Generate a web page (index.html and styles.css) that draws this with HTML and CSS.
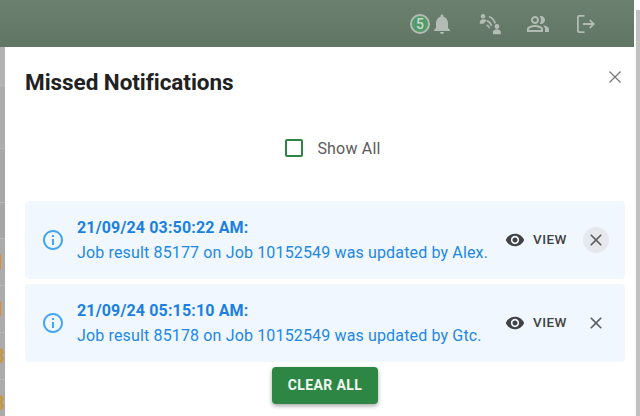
FILE: index.html
```html
<!DOCTYPE html>
<html lang="en">
<head>
<meta charset="utf-8">
<title>Missed Notifications</title>
<link rel="stylesheet" href="styles.css">
</head>
<body>
<div class="window">
<header class="topbar">
  <span class="badge">5</span>
  <svg class="icon bell" viewBox="0 0 24 24"><path d="M12 22c1.100 0 2-.9 2-2h-4c0 1.100.9 2 2 2m6-6v-5c0-3.070-1.630-5.640-4.500-6.320V4c0-.83-.67-1.500-1.500-1.500s-1.500.67-1.500 1.500v.68C7.640 5.360 6 7.920 6 11v5l-2 2v1h16v-1z"/></svg>
  <svg class="icon wave" viewBox="0 0 24 24"><circle cx="5" cy="4.200" r="2.200"/><path d="M1.800 11.800V9.800c0-1.500 2-2.500 3.400-2.500 1.400 0 2.600.5 3.500 1.200l-3.200 3.300zM21.300 14.500a2.400 2.400 0 1 1-4.800 0 2.400 2.400 0 0 1 4.800 0M15 22.200v-2.400c0-1.400 2.400-2.500 3.900-2.500s3.900 1.100 3.900 2.500v2.400z"/><path class="line" d="M11 4.500c3.200 1.200 5.200 3.400 6.200 7M9 8.800c2.300.8 3.800 2.500 4.500 5M8.500 13c1.300.5 2.300 1.500 3 3"/></svg>
  <svg class="icon people" viewBox="0 0 24 24"><path d="M16.670 13.130C18.040 14.060 19 15.320 19 17v3h4v-3c0-2.180-3.570-3.470-6.330-3.870M15 12c2.210 0 4-1.790 4-4s-1.790-4-4-4c-.47 0-.91.100-1.330.24C14.500 5.270 15 6.580 15 8s-.5 2.730-1.330 3.760c.42.140.86.240 1.330.24M9 12c2.210 0 4-1.790 4-4s-1.790-4-4-4-4 1.790-4 4 1.790 4 4 4m0-6c1.100 0 2 .9 2 2s-.9 2-2 2-2-.9-2-2 .9-2 2-2m0 7c-2.670 0-8 1.340-8 4v3h16v-3c0-2.660-5.330-4-8-4m6 5H3v-.99C3.200 16.290 6.300 15 9 15s5.800 1.290 6 2z"/></svg>
  <svg class="icon logout" viewBox="0 0 24 24"><path d="M10.500 3H5a2 2 0 0 0-2 2v14a2 2 0 0 0 2 2h5.500v-1.800H4.800V4.800h5.700zM16.500 7.500l-1.300 1.300 2.300 2.300H9v1.800h8.500l-2.300 2.300 1.300 1.300 4.500-4.500z"/></svg>
</header>

<div class="page">
  <div class="backdrop-rows">
    <div class="row row-a"></div>
    <div class="row row-b"></div>
    <div class="row row-c"></div>
    <div class="row row-d"></div>
    <div class="row"><span class="digit">1</span></div>
    <div class="row"><span class="digit">1</span></div>
    <div class="row"><span class="digit">3</span></div>
    <div class="row"><span class="digit">3</span></div>
  </div>

  <main class="dialog">
    <div class="dialog-head">
      <h1 class="dialog-title">Missed Notifications</h1>
      <button class="close-dialog" aria-label="Close">
        <svg class="thin-x" viewBox="0 0 12 12"><path d="M.5.500l11 11M11.500.500l-11 11"/></svg>
      </button>
    </div>

    <label class="show-all">
      <span class="check"></span>
      <span class="show-label">Show All</span>
    </label>

    <section class="alerts">
      <article class="alert">
        <svg class="info" viewBox="0 0 24 24"><path d="M11 7h2v2h-2zm0 4h2v6h-2zm1-9C6.480 2 2 6.480 2 12s4.480 10 10 10 10-4.480 10-10S17.520 2 12 2m0 18c-4.410 0-8-3.590-8-8s3.590-8 8-8 8 3.590 8 8-3.590 8-8 8"/></svg>
        <div class="message">
          <div class="stamp">21/09/24 03:50:22 AM:</div>
          <div class="text">Job result 85177 on Job 10152549 was updated by Alex.</div>
        </div>
        <button class="view">
          <svg class="eye" viewBox="0 0 24 24"><path d="M12 4.500C7 4.500 2.730 7.610 1 12c1.730 4.390 6 7.500 11 7.500s9.270-3.110 11-7.500c-1.730-4.390-6-7.500-11-7.500M12 17c-2.760 0-5-2.240-5-5s2.240-5 5-5 5 2.240 5 5-2.240 5-5 5m0-8c-1.660 0-3 1.340-3 3s1.340 3 3 3 3-1.340 3-3-1.340-3-3-3"/></svg>
          <span class="view-label">VIEW</span>
        </button>
        <button class="dismiss hovered" aria-label="Dismiss">
          <svg class="x" viewBox="0 0 24 24"><path d="M19 6.410 17.590 5 12 10.590 6.410 5 5 6.410 10.590 12 5 17.590 6.410 19 12 13.410 17.590 19 19 17.590 13.410 12z"/></svg>
        </button>
      </article>
      <article class="alert">
        <svg class="info" viewBox="0 0 24 24"><path d="M11 7h2v2h-2zm0 4h2v6h-2zm1-9C6.480 2 2 6.480 2 12s4.480 10 10 10 10-4.480 10-10S17.520 2 12 2m0 18c-4.410 0-8-3.590-8-8s3.590-8 8-8 8 3.590 8 8-3.590 8-8 8"/></svg>
        <div class="message">
          <div class="stamp">21/09/24 05:15:10 AM:</div>
          <div class="text">Job result 85178 on Job 10152549 was updated by Gtc.</div>
        </div>
        <button class="view">
          <svg class="eye" viewBox="0 0 24 24"><path d="M12 4.500C7 4.500 2.730 7.610 1 12c1.730 4.390 6 7.500 11 7.500s9.270-3.110 11-7.500c-1.730-4.390-6-7.500-11-7.500M12 17c-2.760 0-5-2.240-5-5s2.240-5 5-5 5 2.240 5 5-2.240 5-5 5m0-8c-1.660 0-3 1.340-3 3s1.340 3 3 3 3-1.340 3-3-1.340-3-3-3"/></svg>
          <span class="view-label">VIEW</span>
        </button>
        <button class="dismiss" aria-label="Dismiss">
          <svg class="x" viewBox="0 0 24 24"><path d="M19 6.410 17.590 5 12 10.590 6.410 5 5 6.410 10.590 12 5 17.590 6.410 19 12 13.410 17.590 19 19 17.590 13.410 12z"/></svg>
        </button>
      </article>
    </section>

    <div class="actions">
      <button class="clear">CLEAR ALL</button>
    </div>
  </main>
</div>
</div>
<aside class="scrollbar">
  <div class="arrow"></div>
  <div class="thumb"></div>
</aside>
</body>
</html>
```

FILE: styles.css
```css
* { box-sizing: border-box; }
html, body { margin: 0; height: 416px; overflow: hidden; }
body { font-family: Roboto, "Liberation Sans", sans-serif; background: #fff; display: flex; }
button { font-family: inherit; border: 0; background: none; padding: 0; }

.window { width: 634px; flex: none; display: flex; flex-direction: column; height: 416px; }

.scrollbar { flex: 1; background: #fbfbfb; padding-left: 2px; display: flex; flex-direction: column; }
.arrow { height: 10px; flex: none; }
.thumb { flex: 1; background: #c1c1c1; }

.topbar { height: 47px; flex: none; background: linear-gradient(#6b806f, #617565); display: flex; align-items: center; padding-left: 410px; fill: #b3bcb4; }
.badge { width: 20px; height: 20px; border-radius: 50%; background: #559a6a; border: 2px solid #b3bcb4; color: #c6d6ca; font-size: 14px; font-weight: 500; display: flex; align-items: center; justify-content: center; }
.icon { width: 24px; height: 24px; flex: none; }
.wave { margin-left: 24px; }
.people { margin-left: 24px; }
.logout { margin-left: 24px; }
.line { fill: none; stroke: #b3bcb4; stroke-width: 1.600; }

.page { flex: 1; display: flex; min-height: 0; }
.backdrop-rows { width: 5px; flex: none; background: #ababab; overflow: hidden; }
.row { height: 47px; border-top: 1px solid #b8b8b8; overflow: hidden; display: flex; justify-content: flex-end; align-items: center; }
.row-a { height: 38px; border-top: 0; background: #b3b3b3; }
.row-b { height: 63px; background: #adadad; }
.row-c { height: 54px; background: #a8a8a8; }
.row-d { height: 36px; background: #a6a6a6; }
.digit { font-size: 20px; font-weight: 700; line-height: 20px; color: #c6983f; flex: none; }

.dialog { flex: 1; background: #fff; border-radius: 8px 8px 0 0; padding: 0 9px 0 20px; display: flex; flex-direction: column; }

.dialog-head { height: 70px; display: flex; align-items: center; justify-content: space-between; flex: none; padding-bottom: 1px; }
.dialog-title { margin: 0; font-size: 22.500px; font-weight: 700; letter-spacing: -.05px; color: #212121; }
.close-dialog { width: 12px; height: 12px; margin: 0 4px 9px 0; }
.thin-x { width: 12px; height: 12px; display: block; fill: none; stroke: #757575; stroke-width: 1.200; }

.show-all { display: flex; align-items: center; justify-content: center; gap: 14px; height: 22px; margin-top: 20px; padding-left: 16px; flex: none; }
.check { width: 18px; height: 18px; border: 2px solid #2e8644; border-radius: 2px; }
.show-label { font-size: 16px; color: #5b5b5b; letter-spacing: .2px; }

.alerts { margin-top: 42px; display: flex; flex-direction: column; gap: 5px; flex: none; }
.alert { height: 78px; background: #f0f7fe; border-radius: 4px; display: flex; align-items: center; padding: 0 16px; color: #1e88e5; }
.info { width: 24px; height: 24px; flex: none; fill: #42a5f5; }
.message { flex: 1; margin-left: 12px; font-size: 16px; line-height: 25px; letter-spacing: .15px; }
.stamp { font-weight: 700; color: #1b80e0; }
.text { color: #1e88e5; }

.view { display: flex; align-items: center; gap: 7.500px; color: #424242; font-size: 13.500px; font-weight: 500; letter-spacing: .5px; }
.view-label { padding-bottom: 2px; }
.eye { width: 20px; height: 20px; fill: #424242; }
.dismiss { width: 26px; height: 26px; border-radius: 50%; margin-left: 16px; display: flex; align-items: center; justify-content: center; fill: #616161; }
.dismiss .x { width: 20px; height: 20px; }
.hovered { background: #e5e8ec; }

.actions { display: flex; justify-content: center; margin-top: 5px; padding-left: 0; }
.clear { width: 106px; height: 37px; background: #2e8644; color: #f1f6f2; border-radius: 4px; font-size: 14px; font-weight: 700; letter-spacing: .4px; padding-bottom: 2px; box-shadow: 0 2px 4px rgba(0,0,0,.35); }
```
